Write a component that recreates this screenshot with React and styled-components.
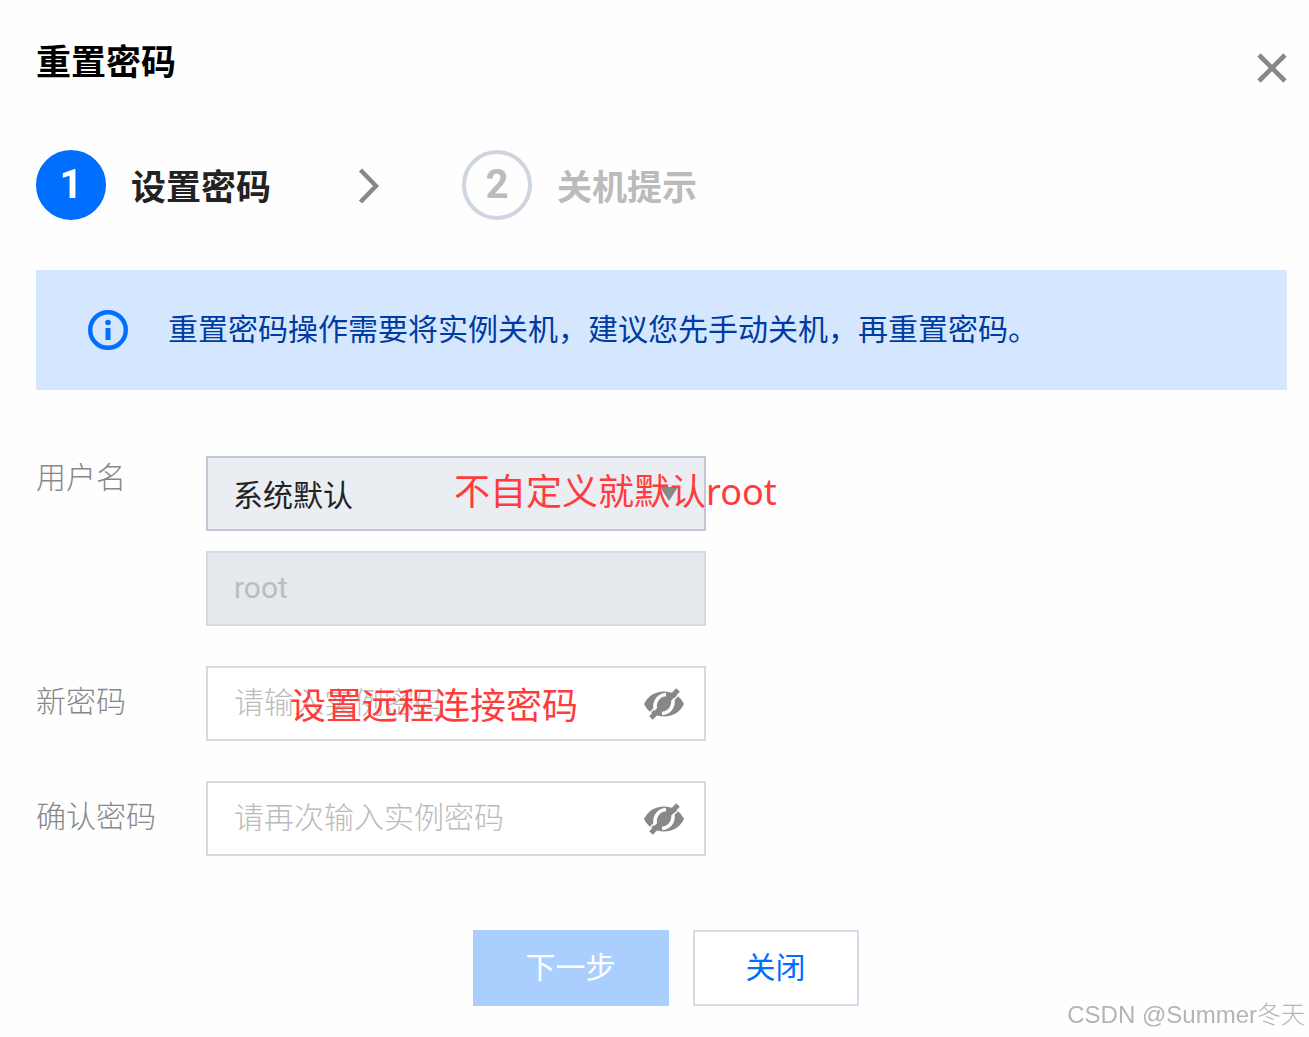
import React, { useState } from "react";
import styled, { createGlobalStyle } from "styled-components";

const GlobalStyle = createGlobalStyle`
  * {
    box-sizing: border-box;
  }

  body {
    margin: 0;
    background: #fefefe;
    font-family: Roboto, "Noto Sans CJK SC", sans-serif;
    font-size: 30px;
  }

  button,
  input,
  select {
    font: inherit;
  }
`;

const Dialog = styled.main`
  padding: 36px 22px 31px 36px;
`;

const Header = styled.header`
  display: flex;
  justify-content: space-between;
  align-items: flex-start;
`;

const Title = styled.h1`
  margin: 0;
  font-size: 35px;
  font-weight: 700;
  line-height: 56px;
  color: #000;
`;

const IconButton = styled.button`
  display: flex;
  padding: 0;
  border: none;
  background: none;
  color: #888;
  cursor: pointer;
`;

const CloseButton = styled(IconButton)`
  padding: 17px 0;
`;

const Steps = styled.ol`
  display: flex;
  align-items: center;
  margin: 50px 0 0;
  padding: 0;
  list-style: none;
`;

const Step = styled.li`
  display: flex;
  align-items: center;
  gap: 25px;
  font-size: 35px;
  font-weight: 700;
  color: ${({ $active }) => ($active ? "#222" : "#bbb")};
`;

const StepNumber = styled.span`
  display: flex;
  align-items: center;
  justify-content: center;
  width: 70px;
  height: 70px;
  border: 4px solid ${({ $active }) => ($active ? "#006eff" : "#cfd5de")};
  border-radius: 50%;
  background: ${({ $active }) => ($active ? "#006eff" : "transparent")};
  color: ${({ $active }) => ($active ? "#fff" : "#bbb")};
  font-family: Roboto, sans-serif;
  font-size: 40px;
  line-height: 1;
`;

const StepLabel = styled.span`
  padding-bottom: 2px;
`;

const StepArrow = styled.li`
  display: flex;
  margin: 0 82px 0 87px;
  color: #888;
`;

const Notice = styled.div`
  display: flex;
  align-items: center;
  gap: 40px;
  min-height: 120px;
  margin-top: 50px;
  padding: 0 52px;
  background: #d5e7ff;
  color: #003b9f;
`;

const NoticeText = styled.p`
  margin: 0;
  padding-bottom: 6px;
`;

const Form = styled.form`
  display: flex;
  flex-direction: column;
  gap: 40px;
  margin-top: 66px;
`;

const Row = styled.div`
  display: flex;
  align-items: ${({ $top }) => ($top ? "flex-start" : "center")};
`;

const Label = styled.label`
  flex: 0 0 170px;
  padding-bottom: 4px;
  font-weight: 300;
  line-height: 44px;
  color: #888;
`;

const Controls = styled.div`
  display: flex;
  flex-direction: column;
  gap: 20px;
  flex: 0 1 500px;
`;

const Field = styled.div`
  position: relative;
  display: flex;
  align-items: center;
  height: 75px;
  border: 2px solid ${({ $dark }) => ($dark ? "#c0c8d5" : "#d5dbe4")};
  background: ${({ $fill }) => $fill || "#fff"};
`;

const Input = styled.input`
  flex: 1;
  min-width: 0;
  height: 100%;
  padding: 0 26px 2px;
  border: none;
  outline: none;
  background: none;
  font-weight: 300;
  color: #222;

  &::placeholder {
    color: #bbb;
    opacity: 1;
  }

  &:disabled {
    font-weight: 400;
    color: #b9bcc0;
  }
`;

const Select = styled.select`
  flex: 1;
  height: 100%;
  padding: 4px 26px 0 25px;
  border: none;
  outline: none;
  background: none;
  appearance: none;
  color: #222;
`;

const Caret = styled.svg`
  position: absolute;
  right: 26px;
  pointer-events: none;
`;

const EyeButton = styled(IconButton)`
  margin-right: 20px;
`;

// Red hint lying over a field
const Annotation = styled.span`
  position: absolute;
  top: ${({ $top }) => $top}px;
  left: ${({ $left }) => $left}px;
  font-family: "Noto Sans", "Noto Sans CJK SC", sans-serif;
  font-size: 36px;
  line-height: 52px;
  white-space: nowrap;
  color: #ff3b3b;
  pointer-events: none;
`;

const Actions = styled.div`
  display: flex;
  justify-content: center;
  gap: 24px;
  margin-top: 34px;
  padding-left: 8px;
`;

const Button = styled.button`
  height: 76px;
  padding: 0 51px 6px;
  border: 2px solid ${({ $primary }) => ($primary ? "#aacfff" : "#d5dbe4")};
  background: ${({ $primary }) => ($primary ? "#aacfff" : "#fff")};
  color: ${({ $primary }) => ($primary ? "#fff" : "#006eff")};
  cursor: pointer;
`;

const Watermark = styled.div`
  position: fixed;
  right: 4px;
  bottom: 4px;
  font-family: "Liberation Sans", "Noto Sans CJK SC", sans-serif;
  font-size: 24px;
  font-weight: 300;
  line-height: 36px;
  color: #b4b4b4;
  pointer-events: none;
`;

const CloseIcon = () => (
  <svg width="30" height="30" viewBox="0 0 30 30" fill="none" stroke="currentColor" strokeWidth="4.6">
    <path d="M2 2l26 26M28 2L2 28" />
  </svg>
);

const ArrowIcon = () => (
  <svg width="22" height="36" viewBox="0 0 22 36" fill="none" stroke="currentColor" strokeWidth="4.4">
    <path d="M2.5 3L18 19L2.5 35" />
  </svg>
);

const InfoIcon = () => (
  <svg width="40" height="40" viewBox="0 0 40 40" fill="none">
    <circle cx="20" cy="20" r="17.8" stroke="#006eff" strokeWidth="4.4" />
    <path d="M20 18v12" stroke="#006eff" strokeWidth="5" />
    <circle cx="20" cy="12.5" r="2.8" fill="#006eff" />
  </svg>
);

const EyeOffIcon = () => (
  <svg width="40" height="38" viewBox="0 0 40 38" fill="none">
    <path
      d="M0 19C4 10.500 12 6.500 20 6.500S36 10.500 40 19C36 27.500 28 31.500 20 31.500S4 27.500 0 19z"
      fill="#888"
    />
    <path d="M12.500 27C8.500 19 13 10.500 22 9.500" stroke="#fff" strokeWidth="3.6" />
    <path d="M27.500 11C31.500 19 27 27.500 18 28.500" stroke="#fff" strokeWidth="3.6" />
    <path d="M4 30L12 21.500M28 16L37 8" stroke="#fff" strokeWidth="1.6" />
    <path d="M7 33L34 5" stroke="#888" strokeWidth="5" />
    <circle cx="20" cy="19" r="5.6" fill="#888" />
  </svg>
);

const PasswordRow = ({ id, label, placeholder, annotation }) => {
  const [visible, setVisible] = useState(false);
  const [value, setValue] = useState("");

  return (
    <Row>
      <Label htmlFor={id}>{label}</Label>
      <Controls>
        <Field>
          <Input
            id={id}
            type={visible ? "text" : "password"}
            placeholder={placeholder}
            value={value}
            onChange={(e) => setValue(e.target.value)}
          />
          <EyeButton type="button" aria-label="显示密码" onClick={() => setVisible(!visible)}>
            <EyeOffIcon />
          </EyeButton>
          {annotation && (
            <Annotation $top={12} $left={82}>
              {annotation}
            </Annotation>
          )}
        </Field>
      </Controls>
    </Row>
  );
};

const App = () => {
  return (
    <>
      <GlobalStyle />
      <Dialog>
        <Header>
          <Title>重置密码</Title>
          <CloseButton type="button" aria-label="关闭对话框">
            <CloseIcon />
          </CloseButton>
        </Header>

        <Steps>
          <Step $active>
            <StepNumber $active>1</StepNumber>
            <StepLabel>设置密码</StepLabel>
          </Step>
          <StepArrow aria-hidden="true">
            <ArrowIcon />
          </StepArrow>
          <Step>
            <StepNumber>2</StepNumber>
            <StepLabel>关机提示</StepLabel>
          </Step>
        </Steps>

        <Notice>
          <InfoIcon />
          <NoticeText>重置密码操作需要将实例关机，建议您先手动关机，再重置密码。</NoticeText>
        </Notice>

        <Form onSubmit={(e) => e.preventDefault()}>
          <Row $top>
            <Label htmlFor="user-type">用户名</Label>
            <Controls>
              <Field $dark $fill="#eaedf2">
                <Select id="user-type">
                  <option>系统默认</option>
                </Select>
                <Caret width="18" height="14" viewBox="0 0 18 14">
                  <path d="M0 0h18L9 14z" fill="#888" />
                </Caret>
                <Annotation $top={8} $left={246}>
                  不自定义就默认root
                </Annotation>
              </Field>
              <Field $fill="#e5e8ed">
                <Input aria-label="用户名" value="root" disabled readOnly />
              </Field>
            </Controls>
          </Row>

          <PasswordRow
            id="new-password"
            label="新密码"
            placeholder="请输入实例密码"
            annotation="设置远程连接密码"
          />
          <PasswordRow id="confirm-password" label="确认密码" placeholder="请再次输入实例密码" />

          <Actions>
            <Button type="submit" $primary>
              下一步
            </Button>
            <Button type="button">关闭</Button>
          </Actions>
        </Form>
      </Dialog>
      <Watermark>CSDN @Summer冬天</Watermark>
    </>
  );
};

export default App;
